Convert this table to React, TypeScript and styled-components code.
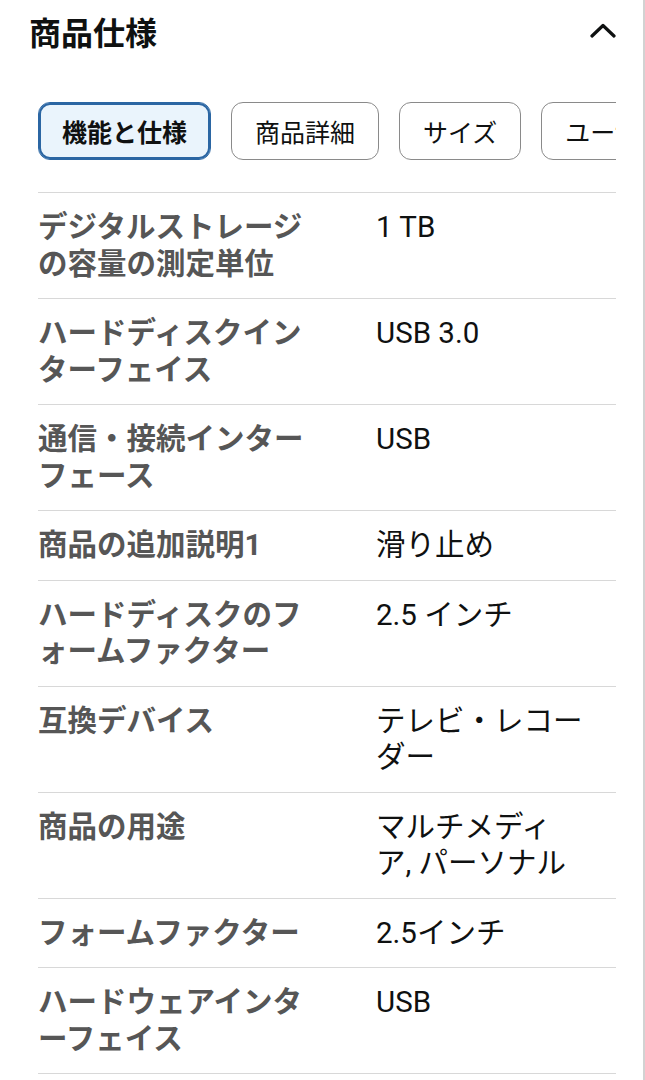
import React from "react";
import styled, { createGlobalStyle } from "styled-components";

const GlobalStyle = createGlobalStyle`
  html, body {
    margin: 0;
    padding: 0;
    background: #ffffff;
  }
  body {
    font-family: Roboto, "Noto Sans CJK JP", "Noto Sans", sans-serif;
    color: #0f1111;
  }
  * { box-sizing: border-box; }
`;

const Page = styled.div`
  width: 645px;
  min-height: 1080px;
  border-right: 2px solid #d2d2d2;
  padding-right: 27px;
  overflow: hidden;
`;

const Header = styled.div`
  display: flex;
  align-items: center;
  justify-content: space-between;
  height: 40px;
  margin-top: 14px;
  padding-left: 29px;
`;

const Title = styled.h2`
  margin: 0;
  font-size: 32px;
  line-height: 40px;
  font-weight: 700;
  color: #0f1111;
`;

const Chevron = styled.svg`
  width: 26px;
  height: 15px;
  margin-bottom: 8px;
`;

const Body = styled.div`
  padding-left: 38px;
`;

const TabRow = styled.div`
  display: flex;
  gap: 20px;
  margin-top: 48px;
  overflow: hidden;
`;

const Tab = styled.div<{ $active?: boolean }>`
  flex-shrink: 0;
  height: 58px;
  padding: 0 23px;
  display: flex;
  align-items: center;
  border-radius: 12px;
  border: 1px solid ${(p) => (p.$active ? "#2b66a3" : "#8a8a8a")};
  box-shadow: ${(p) => (p.$active ? "inset 0 0 0 2px #2b66a3" : "none")};
  background: ${(p) => (p.$active ? "#eaf4fc" : "#ffffff")};
  font-size: 25px;
  font-weight: ${(p) => (p.$active ? 700 : 400)};
  color: #0f1111;
  white-space: nowrap;
`;

const Table = styled.div`
  margin-top: 32px;
  border-top: 1px solid #d8d8d8;
`;

const Row = styled.div`
  display: grid;
  grid-template-columns: 338px 240px;
  padding: 16px 0;
  border-bottom: 1px solid #d8d8d8;
  font-size: 29.5px;
  line-height: 36.5px;
`;

const Label = styled.div`
  padding-right: 56px;
  font-weight: 700;
  color: #565656;
`;

const Value = styled.div`
  padding-right: 31px;
  font-weight: 400;
  color: #0f1111;
`;

const tabs = ["機能と仕様", "商品詳細", "サイズ", "ユーザーガイド"];

const specs: [string, string][] = [
  ["デジタルストレージの容量の測定単位", "1 TB"],
  ["ハードディスクインターフェイス", "USB 3.0"],
  ["通信・接続インターフェース", "USB"],
  ["商品の追加説明1", "滑り止め"],
  ["ハードディスクのフォームファクター", "2.5 インチ"],
  ["互換デバイス", "テレビ・レコーダー"],
  ["商品の用途", "マルチメディア, パーソナル"],
  ["フォームファクター", "2.5インチ"],
  ["ハードウェアインターフェイス", "USB"],
];

export default function App() {
  return (
    <>
      <GlobalStyle />
      <Page>
        <Header>
          <Title>商品仕様</Title>
          <Chevron viewBox="0 0 26 15" fill="none">
            <path
              d="M2 13 L13 2.5 L24 13"
              stroke="#0f1111"
              strokeWidth="3.2"
              strokeLinecap="round"
              strokeLinejoin="round"
            />
          </Chevron>
        </Header>
        <Body>
          <TabRow>
            {tabs.map((t, i) => (
              <Tab key={t} $active={i === 0}>
                {t}
              </Tab>
            ))}
          </TabRow>
          <Table>
            {specs.map(([k, v]) => (
              <Row key={k}>
                <Label>{k}</Label>
                <Value>{v}</Value>
              </Row>
            ))}
          </Table>
        </Body>
      </Page>
    </>
  );
}
